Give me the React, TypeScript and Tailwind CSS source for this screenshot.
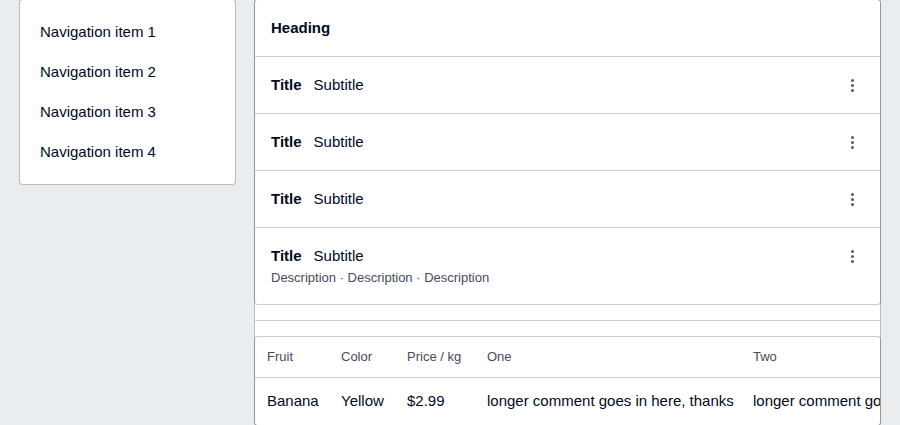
const navigation = [
  "Navigation item 1",
  "Navigation item 2",
  "Navigation item 3",
  "Navigation item 4",
];

type Item = { title: string; subtitle: string; description?: string };

const items: Item[] = [
  { title: "Title", subtitle: "Subtitle" },
  { title: "Title", subtitle: "Subtitle" },
  { title: "Title", subtitle: "Subtitle" },
  {
    title: "Title",
    subtitle: "Subtitle",
    description: "Description · Description · Description",
  },
];

const columns = [
  { name: "Fruit", width: "w-[74px]" },
  { name: "Color", width: "w-[66px]" },
  { name: "Price / kg", width: "w-[80px]" },
  { name: "One", width: "w-[266px]" },
  { name: "Two", width: "w-[266px]" },
];

const fruits = [
  [
    "Banana",
    "Yellow",
    "$2.99",
    "longer comment goes in here, thanks",
    "longer comment goes in here, thanks",
  ],
];

function MoreIcon() {
  return (
    <svg
      className="h-4 w-4"
      viewBox="0 0 16 16"
      fill="currentColor"
      aria-hidden="true"
    >
      <circle cx="8.5" cy="3.5" r="1.5" />
      <circle cx="8.5" cy="8.5" r="1.5" />
      <circle cx="8.5" cy="13.5" r="1.5" />
    </svg>
  );
}

function Sidebar() {
  return (
    <nav className="w-1/4 shrink-0 rounded-[3px] bg-white py-3 shadow-[0_0_0_1px_rgba(0,10,31,0.21)]">
      <ul>
        {navigation.map((label) => (
          <li key={label}>
            <a href="#" className="block px-5 py-2 leading-6">
              {label}
            </a>
          </li>
        ))}
      </ul>
    </nav>
  );
}

function ItemRow({ item }: { item: Item }) {
  return (
    <li className="flex items-start justify-between border-t border-[#cbccce] px-4 py-4">
      <div>
        <div className="flex gap-3 leading-6">
          <strong className="font-bold">{item.title}</strong>
          <span>{item.subtitle}</span>
        </div>
        {item.description && (
          <p className="text-[13px] leading-5 text-[#474b59]">
            {item.description}
          </p>
        )}
      </div>
      <button
        type="button"
        aria-label="More actions"
        className="flex h-6 w-6 items-center justify-center text-[#555a66]"
      >
        <MoreIcon />
      </button>
    </li>
  );
}

function ItemList() {
  return (
    <section className="rounded-[3px] bg-white shadow-[0_0_0_1px_rgba(0,10,31,0.21)]">
      <h2 className="p-4 leading-6 font-bold">Heading</h2>
      <ul>
        {items.map((item, index) => (
          <ItemRow key={index} item={item} />
        ))}
      </ul>
    </section>
  );
}

function FruitTable() {
  return (
    <div className="overflow-hidden rounded-[3px] bg-white shadow-[0_0_0_1px_rgba(0,10,31,0.21)]">
      <table className="w-[752px] table-fixed border-separate border-spacing-0 text-left whitespace-nowrap">
        <thead>
          <tr className="text-[13px] leading-5 text-[#474b59]">
            {columns.map((column) => (
              <th
                key={column.name}
                scope="col"
                className={`border-b border-[#cbccce] py-[10px] pl-3 font-normal ${column.width}`}
              >
                {column.name}
              </th>
            ))}
          </tr>
        </thead>
        <tbody>
          {fruits.map((row) => (
            <tr key={row[0]}>
              {row.map((cell, index) => (
                <td key={index} className="pt-[11px] pb-3 pl-3 leading-6">
                  {cell}
                </td>
              ))}
            </tr>
          ))}
        </tbody>
      </table>
    </div>
  );
}

export default function App() {
  return (
    <div className="flex min-h-screen items-start gap-5 bg-[#ebecee] px-5 font-['Liberation_Sans',Arial,sans-serif] text-[15px] text-[#000a1f]">
      <Sidebar />
      <main className="min-w-0 flex-1 rounded-[3px] bg-white shadow-[0_0_0_1px_rgba(0,10,31,0.21)]">
        <ItemList />
        <hr className="my-4 border-t border-[#cbccce]" />
        <FruitTable />
      </main>
    </div>
  );
}
